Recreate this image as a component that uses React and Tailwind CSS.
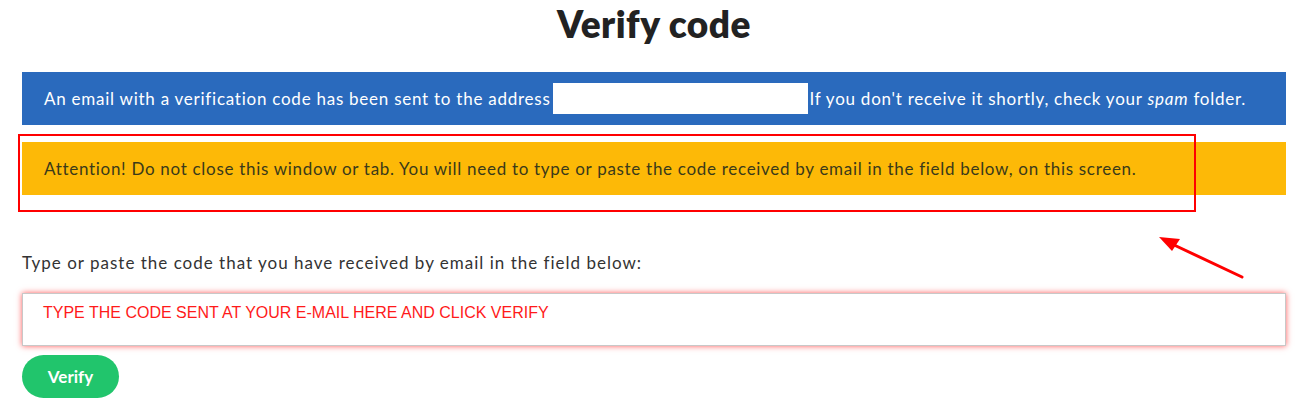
import React from 'react';

export default function App() {
  return (
    <div className="relative w-[1314px] h-[418px] bg-white font-['Lato',sans-serif] text-[#333]">
      <div className="pl-[22px] pr-[28px]">
        <h1 className="pt-[4px] h-[72px] text-center text-[37px] leading-[40px] font-extrabold tracking-[0.5px] text-[#222]">Verify code</h1>

        <div className="h-[53px] flex items-center px-[22px] bg-[#2a6abd] text-white text-[17px] tracking-[0.75px]">
          <span>An email with a verification code has been sent to the address</span>
          <span className="inline-block w-[255px] h-[31px] mx-[2px] bg-white" />
          <span>
            If you don't receive it shortly, check your <em>spam</em> folder.
          </span>
        </div>

        <div className="mt-[17px] h-[53px] flex items-center px-[22px] bg-[#fdb907] text-[#3a3a1a] text-[17px] tracking-[0.7px]">
          Attention! Do not close this window or tab. You will need to type or paste the code received by email in the field below, on this screen.
        </div>

        <p className="mt-[56px] text-[17px] leading-[24px] tracking-[1px] text-[#333]">
          Type or paste the code that you have received by email in the field below:
        </p>

        <textarea
          rows={1}
          placeholder="TYPE THE CODE SENT AT YOUR E-MAIL HERE AND CLICK VERIFY"
          className="block mt-[18px] w-full h-[53px] resize-none border border-[#c8c8c8] shadow-[0_0_6px_rgba(255,0,0,0.65)] pt-[9px] px-[20px] font-['Liberation_Sans',sans-serif] text-[16px] leading-[20px] placeholder:text-[#ff1a1a] outline-none"
        />

        <button className="mt-[9px] w-[97px] h-[43px] rounded-full bg-[#21c56c] text-white text-[17px] font-bold">
          Verify
        </button>
      </div>

      <div className="absolute left-[18px] top-[134px] w-[1178px] h-[78px] border-2 border-[#ff0000]" />

      <svg className="absolute left-[1150px] top-[230px]" width="100" height="52" viewBox="0 0 100 52">
        <line x1="92" y1="47" x2="22" y2="14" stroke="#f00" strokeWidth="3" strokeLinecap="round" />
        <polygon points="9,7 30,9 22,21" fill="#f00" />
      </svg>
    </div>
  );
}
